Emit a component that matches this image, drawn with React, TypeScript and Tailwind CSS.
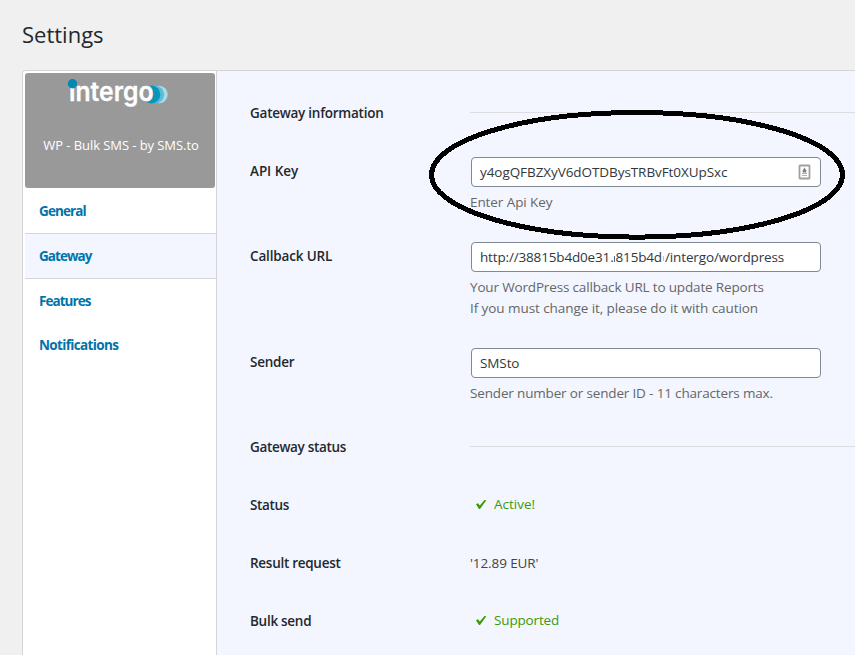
import type { ReactNode } from 'react';

function Logo() {
  return (
    <svg className="block h-[34px] w-[104px] overflow-visible" viewBox="66 76 104 34" role="img" aria-label="intergo">
      <circle cx="159" cy="94.5" r="8.7" fill="#a9dbe8" />
      <circle cx="155.3" cy="94.5" r="8.8" fill="#5bbcd6" />
      <circle cx="151.3" cy="94.5" r="9" fill="#0595bd" />
      <circle cx="145" cy="94.5" r="8.4" fill="#999999" />
      <text
        x="69"
        y="101.3"
        fontFamily="Inter, sans-serif"
        fontWeight="600"
        fontSize="26"
        textLength="84.5"
        lengthAdjust="spacingAndGlyphs"
        fill="#fff"
        stroke="#fff"
        strokeWidth="0.3"
      >
        ıntergo
      </text>
      <circle cx="72.5" cy="83.7" r="4.7" fill="#0587b0" />
    </svg>
  );
}

function NavItem({ children, className }: { children: ReactNode; className: string }) {
  return (
    <a className={`flex items-center pl-[14px] text-[13.5px] font-bold text-[#0073aa] ${className}`}>
      {children}
    </a>
  );
}

function Row({ label, labelClass, height, children }: { label: string; labelClass: string; height: string; children: ReactNode }) {
  return (
    <div className={`flex ${height}`}>
      <div className={`w-[220px] shrink-0 pt-5 text-[13.5px] leading-[18px] font-semibold whitespace-nowrap text-[#23282d] ${labelClass}`}>
        {label}
      </div>
      <div className="min-w-0 grow pt-[15px]">{children}</div>
    </div>
  );
}

function Field({ children }: { children: ReactNode }) {
  return (
    <div className="ml-px flex h-[30px] w-[350px] items-center rounded-[4px] border border-[#7e8993] bg-white pr-[9px] pl-2 text-[13.5px] whitespace-nowrap text-[#32373c]">
      {children}
    </div>
  );
}

function Check() {
  return (
    <svg className="mr-[7px] ml-[5px] h-[11px] w-[12px]" viewBox="0 0 12 11">
      <path d="M1 5.2 L3 4.2 L4.8 6.6 L9.5 1 L11.3 1.2 L5 10 L4 10 Z" fill="#3c9a05" />
    </svg>
  );
}

function KeyIcon() {
  return (
    <svg className="ml-auto h-[16px] w-[13px] shrink-0" viewBox="0 0 13 16">
      <rect x="1.5" y="1.5" width="10" height="13" rx="0.5" fill="#fff" stroke="#a0a0a0" strokeWidth="1.8" />
      <path d="M6.5 3.5 L8.3 6.5 V8.5 H4.7 V6.5 Z" fill="#808080" />
      <path d="M4 9.5 H9 M4 11.5 H9" stroke="#b0b0b0" strokeWidth="1" />
    </svg>
  );
}

export default function App() {
  return (
    <div className="relative flex h-[655px] w-[855px] flex-col overflow-hidden bg-[#f0f0f0] pl-[22px] font-['Open_Sans','Noto_Sans',sans-serif]">
      <h1 className="h-[70px] shrink-0 pt-[19px] text-[22px] leading-[30px] font-normal text-[#23282d]">Settings</h1>
      <div className="flex grow rounded-tl-[4px] border-t border-l border-[#d5d5d8] bg-[#f3f6ff]">
        <nav className="flex w-[194px] shrink-0 flex-col rounded-tl-[4px] border-r border-[#d5d5d8] bg-white pl-[2px]">
          <div className="mt-[2px] flex h-[115px] w-[190px] flex-col items-center rounded-[3px] bg-[#999]">
            <div className="mt-[3px] -ml-[4px]"><Logo /></div>
            <div className="mt-[25px] ml-[2px] text-[13px] leading-[20px] tracking-[-0.07px] whitespace-nowrap text-white">WP - Bulk SMS - by SMS.to</div>
          </div>
          <NavItem className="h-[45px] pt-[2px] tracking-[-0.9px]">General</NavItem>
          <NavItem className="h-[46px] border-y border-[#d5d5d8] bg-[#f3f6ff] tracking-[-0.95px]">Gateway</NavItem>
          <NavItem className="h-[44px] tracking-[-0.95px]">Features</NavItem>
          <NavItem className="h-[44px] tracking-[-0.65px]">Notifications</NavItem>
        </nav>
        <main className="flex grow flex-col pt-[13px] pl-[33px]">
          <Row label="Gateway information" labelClass="tracking-[-0.25px]" height="h-[58px]">
            <div className="mt-[13px] h-px bg-[#dddddf]" />
          </Row>
          <Row label="API Key" labelClass="tracking-[-0.05px]" height="h-[85px]">
            <Field><span className="tracking-[-0.07px]">y4ogQFBZXyV6dOTDBysTRBvFt0XUpSxc</span><KeyIcon /></Field>
            <p className="mt-[5px] text-[13.5px] leading-[21px] tracking-[-0.08px] text-[#666]">Enter Api Key</p>
          </Row>
          <Row label="Callback URL" labelClass="tracking-[-0.15px]" height="h-[106px]">
            <Field>
              <span className="tracking-[-0.16px]">http://38815b4d0e31.</span>
              <span className="mt-[3px] mr-px inline-block h-[6px] w-px bg-[#4a6d8c]" />
              <span className="tracking-[-0.16px]">815b4d</span>
              <span className="mt-[3px] mr-px ml-px h-[5px] w-px bg-[#a5cbe0]" />
              <span className="tracking-[-0.13px]">/intergo/wordpress</span>
            </Field>
            <p className="mt-[5px] text-[13.5px] leading-[21px] text-[#666]">
              <span className="tracking-[-0.16px]">Your WordPress callback URL to update Reports</span><br />
              <span className="tracking-[-0.07px]">If you must change it, please do it with caution</span>
            </p>
          </Row>
          <Row label="Sender" labelClass="tracking-[-0.25px]" height="h-[85px]">
            <Field><span className="tracking-[-0.1px]">SMSto</span></Field>
            <p className="mt-[5px] text-[13.5px] leading-[21px] tracking-[-0.16px] text-[#666]">Sender number or sender ID - 11 characters max.</p>
          </Row>
          <Row label="Gateway status" labelClass="tracking-[-0.33px]" height="h-[58px]">
            <div className="mt-[13px] h-px bg-[#dddddf]" />
          </Row>
          <Row label="Status" labelClass="tracking-[-0.35px]" height="h-[58px]">
            <div className="mt-[3px] flex items-center text-[13.5px] leading-[21px] text-[#3c9a05]"><Check />Active!</div>
          </Row>
          <Row label="Result request" labelClass="tracking-[-0.28px]" height="h-[58px]">
            <div className="mt-[4px] text-[13.5px] leading-[21px] tracking-[-0.1px] text-[#444]">'12.89 EUR'</div>
          </Row>
          <Row label="Bulk send" labelClass="tracking-[-0.28px]" height="h-[58px]">
            <div className="mt-[3px] flex items-center text-[13.5px] leading-[21px] tracking-[-0.15px] text-[#3c9a05]"><Check />Supported</div>
          </Row>
        </main>
      </div>
      <svg className="pointer-events-none absolute top-[108px] left-[427px] h-[134px] w-[420px]" viewBox="427 108 420 134" shapeRendering="crispEdges">
        <ellipse cx="637" cy="174.8" rx="205.5" ry="62.3" fill="none" stroke="#000" strokeWidth="5" />
      </svg>
    </div>
  );
}
